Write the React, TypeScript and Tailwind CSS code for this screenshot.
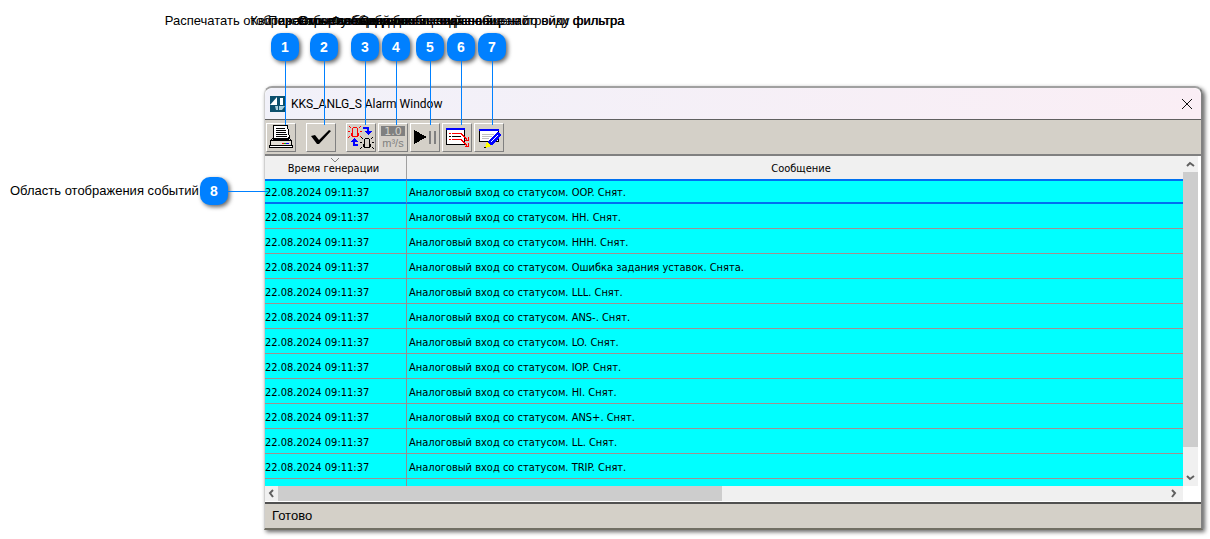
import { useState } from 'react';

interface Callout {
  id: number;
  label: string;
  badge: string;
}

// Each callout is a column: caption, numbered badge, leader line
const callouts: Callout[] = [
  { id: 1, label: 'Распечатать отображаемые сообщения', badge: 'left-[271px]' },
  { id: 2, label: 'Квитировать сообщения', badge: 'left-[310px]' },
  { id: 3, label: 'Переключение вида сообщений', badge: 'left-[351px]' },
  { id: 4, label: 'Скрытие/отображение значений', badge: 'left-[382px]' },
  { id: 5, label: 'Функция обновления сообщений', badge: 'left-[416px]' },
  { id: 6, label: 'Отбор событий для вывода на экран по виду фильтра', badge: 'left-[447px]' },
  { id: 7, label: 'Создание и сохранение настройки фильтра', badge: 'left-[478px]' },
];

const events = [
  'OOP. Снят.',
  'HH. Снят.',
  'HHH. Снят.',
  'Ошибка задания уставок. Снята.',
  'LLL. Снят.',
  'ANS-. Снят.',
  'LO. Снят.',
  'IOP. Снят.',
  'HI. Снят.',
  'ANS+. Снят.',
  'LL. Снят.',
  'TRIP. Снят.',
  '',
];

function Badge({ id }: { id: number }) {
  return (
    <span className="flex h-7 w-7 shrink-0 items-center justify-center rounded-[10px] bg-[#0080ff] text-sm font-bold text-white shadow-[2px_2px_4px_rgba(0,0,0,0.6)]">
      {id}
    </span>
  );
}

function PrinterIcon() {
  return (
    <svg width="24" height="24" viewBox="0 0 24 24" shapeRendering="crispEdges">
      <path d="M4.500 0.500h14l2 13h-16z" fill="#fff" stroke="#000" />
      <path d="M7 3.500h9M7 5.500h10M7 7.500h10M7 9.500h11M7 11.500h11" stroke="#000" />
      <path d="M4.500 12.500l-3 3v4h21v-4l-3-3v2h-15z" fill="#d4d0c8" stroke="#000" />
      <path d="M1.500 15.500h21v5h-21z" stroke="#000" fill="#e4e0d8" />
      <path d="M0.500 20.500h23v2h-23z" stroke="#000" fill="#fff" />
      <path d="M13 18.500h2" stroke="#f00" />
      <path d="M15 18.500h2" stroke="#0a0" />
      <path d="M17 18.500h3" stroke="#00f" />
    </svg>
  );
}

function CheckIcon() {
  return (
    <svg width="24" height="24" viewBox="0 0 24 24">
      <path d="M2 11l4-1 4 5L20 5l2 1-12 13H8z" fill="#000" />
    </svg>
  );
}

function Lamp({ color }: { color: string }) {
  return (
    <g fill={color}>
      <path d="M5 2h4v1H5zM4 3h1v6H4zM9 3h1v6H9zM3 8h2v3H3zM9 8h2v3H9zM4 11h6v1H4z" />
      <path d="M0 6h2v1H0zM12 6h2v1h-2zM1 1h1v1H1zM2 2h1v1H2zM12 1h1v1h-1zM11 2h1v1h-1zM0 12h1v1H0zM1 11h1v1H1zM13 12h1v1h-1zM12 11h1v1h-1z" />
    </g>
  );
}

function LampsIcon() {
  return (
    <svg width="26" height="24" viewBox="0 0 26 24" shapeRendering="crispEdges">
      <Lamp color="#f00" />
      <g transform="translate(12 11)">
        <Lamp color="#000" />
      </g>
      <path d="M15 3h5v4M10 20H6v-5" fill="none" stroke="#00f" strokeWidth="2" />
      <path d="M16 6h8l-4 4zM2 17l4-4 4 4z" fill="#00f" />
    </svg>
  );
}

function UnitsIcon() {
  return (
    <svg width="26" height="24" viewBox="0 0 26 24">
      <path d="M1 1h24v10H1z" fill="#808080" />
      <text x="13" y="10" textAnchor="middle" fontSize="11" fill="#d4d0c8" fontFamily="DejaVu Sans">
        1.0
      </text>
      <text x="13" y="22" textAnchor="middle" fontSize="11" fill="#808080" fontFamily="Liberation Sans">
        m³/s
      </text>
    </svg>
  );
}

function PlayIcon() {
  return (
    <svg width="24" height="24" viewBox="0 0 24 24" shapeRendering="crispEdges">
      <path d="M1 5l13 7-13 7z" fill="#000" />
      <path d="M16 6h2v13h-2zM21 6h2v13h-2z" fill="#808080" />
    </svg>
  );
}

function FilterIcon() {
  return (
    <svg width="26" height="24" viewBox="0 0 26 24" shapeRendering="crispEdges">
      <path d="M2.500 3.500h18v16h-18z" fill="#fff" stroke="#000" />
      <path d="M2 4h19" stroke="#00f" strokeWidth="2" />
      <path d="M5 8.500h2M8 8.500h9l6 6M5 14.500h2M8 14.500h9l6 6" stroke="#f00" fill="none" />
      <path d="M5 11.500h2M8 11.500h9" stroke="#000" />
      <path d="M24.500 12v3.500H21M24.500 18v3.500H21" stroke="#f00" fill="none" />
    </svg>
  );
}

function EditIcon() {
  return (
    <svg width="26" height="24" viewBox="0 0 26 24" shapeRendering="crispEdges">
      <path d="M3.500 4.500h19v12h-19z" fill="#fff" stroke="#000" />
      <path d="M3 5h20" stroke="#00f" strokeWidth="2" />
      <path d="M6 9.500h12M6 11.500h10M6 13.500h7" stroke="#c0c0c0" />
      <path d="M22 7l3 3-9 10-4-3z" fill="#00f" stroke="#00f" />
      <path d="M22 10l-7 7" stroke="#fff" />
      <path d="M11 17l4 4-5 2-1-1z" fill="#ff0" />
      <path d="M8 22h2v1H8z" fill="#000" />
    </svg>
  );
}

const tools = [
  { name: 'Печать', icon: <PrinterIcon />, gap: '' },
  { name: 'Квитировать', icon: <CheckIcon />, gap: 'ml-2' },
  { name: 'Режим', icon: <LampsIcon />, gap: 'ml-2' },
  { name: 'Единицы', icon: <UnitsIcon />, gap: '' },
  { name: 'Пауза', icon: <PlayIcon />, gap: '' },
  { name: 'Фильтр', icon: <FilterIcon />, gap: '' },
  { name: 'Настройка', icon: <EditIcon />, gap: '' },
];

function Chevron({ d }: { d: string }) {
  return (
    <svg width="9" height="9" viewBox="0 0 9 9" fill="none" stroke="#606060" strokeWidth="2">
      <path d={d} />
    </svg>
  );
}

function TitleBar({ onClose }: { onClose: () => void }) {
  return (
    <header className="flex h-[31px] items-center rounded-t-lg bg-gradient-to-r from-[#f1f1f9] to-[#faeef5] pr-2 pl-[5px]">
      <svg width="16" height="16" viewBox="0 0 16 16">
        <path d="M0 0h16v16H0z" fill="#0b4f6c" />
        <path d="M0 9l7-8v8zM10 2h3v7h-3z" fill="#fff" />
        <path d="M5 10h3v4H6zM9 10h6l-3 4H9z" fill="#a9cfdd" />
      </svg>
      <h1 className="ml-[5px] flex-1 font-[Roboto,'Open_Sans',sans-serif] text-xs">KKS_ANLG_S Alarm Window</h1>
      <button type="button" aria-label="Закрыть" onClick={onClose}>
        <svg width="12" height="12" viewBox="0 0 12 12" stroke="#111" fill="none">
          <path d="M1 1l10 10M11 1L1 11" />
        </svg>
      </button>
    </header>
  );
}

export default function App() {
  const [selected, setSelected] = useState(0);
  const [open, setOpen] = useState(true);

  return (
    <main className="relative bg-white pt-[86px] pr-[7px] pb-2 pl-[264px] font-['Liberation_Sans',Arial,sans-serif] text-black">
      {open && (
        <section className="overflow-hidden rounded-t-lg border-t-2 border-r-2 border-b-2 border-l border-t-[#a0a0a0] border-r-[#808080] border-b-[#716f64] border-l-[#d0d0d0] shadow-[2px_2px_4px_rgba(0,0,0,0.6)]">
          <TitleBar onClose={() => setOpen(false)} />

          <div className="flex h-[37px] items-center gap-0.5 border-t border-b-2 border-t-[#606060] border-b-[#808080] bg-[#d4d0c8] pl-px">
            {tools.map((tool) => (
              <button
                key={tool.name}
                type="button"
                aria-label={tool.name}
                className={`flex h-[29px] w-[30px] items-center justify-center border border-t-white border-r-[#808080] border-b-[#808080] border-l-white ${tool.gap}`}
              >
                {tool.icon}
              </button>
            ))}
          </div>

          <div className="flex h-[330px] bg-white font-['DejaVu_Sans_Condensed','DejaVu_Sans',sans-serif] text-[11px]">
            <div className="h-full min-w-0 flex-1 overflow-hidden bg-[#00ffff]">
              <table className="w-full table-fixed border-separate border-spacing-0">
                <thead>
                  <tr className="h-[23px] bg-[#f0f0f0]">
                    <th className="relative w-[142px] border-r border-[#a0a0a0] p-0 pt-1 pr-1 font-normal">
                      <svg className="absolute top-0.5 left-[66px]" width="8" height="5" viewBox="0 0 8 5" fill="none" stroke="#808080">
                        <path d="M0 0l4 4 4-4" />
                      </svg>
                      Время генерации
                    </th>
                    <th className="p-0 pt-1 pl-3 font-normal">Сообщение</th>
                  </tr>
                </thead>
                <tbody>
                  {events.map((event, idx) => {
                    const line = selected === idx ? 'border-y-2 border-y-[#0070f0]' : 'border-b border-b-[#a09090]';
                    return (
                      <tr key={idx} onClick={() => setSelected(idx)} className="h-[25px]">
                        <td className={`border-r border-r-[#909090] p-0 pt-[3px] leading-4 whitespace-nowrap ${line}`}>
                          {event && '22.08.2024 09:11:37'}
                        </td>
                        <td className={`p-0 pt-[3px] pl-0.5 leading-4 whitespace-nowrap ${line}`}>
                          {event && `Аналоговый вход со статусом. ${event}`}
                        </td>
                      </tr>
                    );
                  })}
                </tbody>
              </table>
            </div>
            <div className="mr-[3px] flex w-[15px] flex-col items-center bg-[#f0f0f0]">
              <button type="button" aria-label="Вверх" className="flex h-4 items-center">
                <Chevron d="M1 6l3-3 4 3" />
              </button>
              <div className="w-full flex-1 bg-[#cdcdcd]" />
              <button type="button" aria-label="Вниз" className="flex h-[39px] items-end pb-1">
                <Chevron d="M1 3l3 3 4-3" />
              </button>
            </div>
          </div>

          <div className="flex h-4 items-center bg-white pr-[18px] pb-px">
            <div className="flex h-full flex-1 items-center bg-[#f0f0f0]">
              <button type="button" aria-label="Влево" className="flex w-[13px] justify-center">
                <Chevron d="M6 1L3 4l3 4" />
              </button>
              <div className="h-full w-[444px] bg-[#cdcdcd]" />
              <button type="button" aria-label="Вправо" className="mr-[5px] ml-auto">
                <Chevron d="M3 1l3 3-3 4" />
              </button>
            </div>
          </div>

          <footer className="flex h-[26px] items-center border-t-2 border-[#505050] bg-[#d4d0c8] pl-[7px] text-[13px]">Готово</footer>
        </section>
      )}

      {callouts.map((callout) => (
        <div key={callout.id} className={`absolute top-3 flex w-7 flex-col items-center ${callout.badge}`}>
          <span className="mb-1 text-[13px] leading-[17px] whitespace-nowrap">{callout.label}</span>
          <Badge id={callout.id} />
          <span className="h-16 w-px bg-[#0080ff]" />
        </div>
      ))}
      <div className="absolute top-[177px] left-2.5 flex items-center">
        <span className="w-[190px] text-[13px] whitespace-nowrap">Область отображения событий</span>
        <Badge id={8} />
        <span className="h-px w-10 bg-[#0080ff]" />
      </div>
    </main>
  );
}
